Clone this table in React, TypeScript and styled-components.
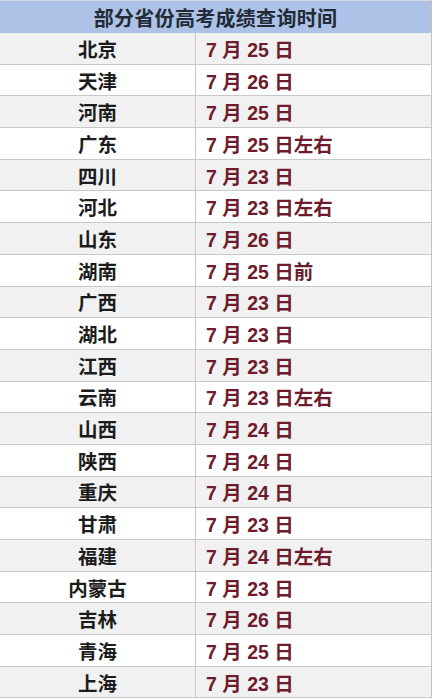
import React from 'react';
import styled, { createGlobalStyle } from 'styled-components';

const GlobalStyle = createGlobalStyle`
	html, body {
		margin: 0;
		padding: 0;
		background: #ffffff;
	}
	body {
		font-family: "Liberation Sans", "Noto Sans CJK SC", sans-serif;
	}
`;

const rows: [string, string][] = [
	['北京', '7 月 25 日'],
	['天津', '7 月 26 日'],
	['河南', '7 月 25 日'],
	['广东', '7 月 25 日左右'],
	['四川', '7 月 23 日'],
	['河北', '7 月 23 日左右'],
	['山东', '7 月 26 日'],
	['湖南', '7 月 25 日前'],
	['广西', '7 月 23 日'],
	['湖北', '7 月 23 日'],
	['江西', '7 月 23 日'],
	['云南', '7 月 23 日左右'],
	['山西', '7 月 24 日'],
	['陕西', '7 月 24 日'],
	['重庆', '7 月 24 日'],
	['甘肃', '7 月 23 日'],
	['福建', '7 月 24 日左右'],
	['内蒙古', '7 月 23 日'],
	['吉林', '7 月 26 日'],
	['青海', '7 月 25 日'],
	['上海', '7 月 23 日'],
];

const Table = styled.div`
	width: 432px;
	border-right: 1px solid #c4c4c4;
	box-sizing: border-box;
	font-weight: bold;
	font-size: 19.5px;
`;

const Header = styled.div`
	height: 33px;
	box-sizing: border-box;
	border-top: 1px solid #d4dcea;
	background: #adc2e6;
	color: #222a36;
	display: flex;
	align-items: center;
	justify-content: center;
	font-size: 20px;
	letter-spacing: 0.3px;
`;

const Row = styled.div<{ $shaded: boolean }>`
	display: grid;
	grid-template-columns: 196px 1fr;
	height: 31.7px;
	box-sizing: border-box;
	border-bottom: 1px solid #c8c8c8;
	background: ${(p) => (p.$shaded ? '#f1f1f1' : '#ffffff')};
`;

const Province = styled.div`
	display: flex;
	align-items: center;
	justify-content: center;
	border-right: 1px solid #c8c8c8;
	color: #1c1c1c;
`;

const DateCell = styled.div`
	display: flex;
	align-items: center;
	padding-left: 10px;
	color: #6e1c2c;
	white-space: pre;
`;

const App: React.FC = () => (
	<>
		<GlobalStyle />
		<Table>
			<Header>部分省份高考成绩查询时间</Header>
			{rows.map(([name, date], i) => (
				<Row key={name} $shaded={i % 2 === 0}>
					<Province>{name}</Province>
					<DateCell>{date}</DateCell>
				</Row>
			))}
		</Table>
	</>
);

export default App;
